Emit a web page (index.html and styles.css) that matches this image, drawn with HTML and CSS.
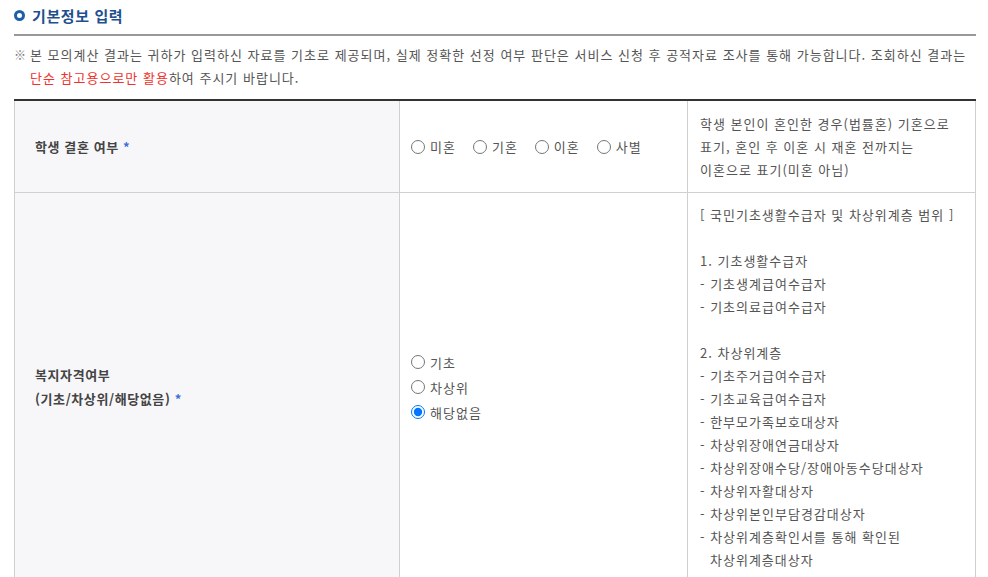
FILE: index.html
```html
<!DOCTYPE html>
<html lang="ko">
<head>
    <meta charset="UTF-8">
    <meta name="viewport" content="width=device-width, initial-scale=1.0">
    <title>기본정보 입력</title>
    <link rel="stylesheet" href="styles.css">
</head>
<body>
    <div class="container">
        <h2 class="section-title"><span class="title-dot"></span>기본정보 입력</h2>

        <p class="notice">
            <span class="notice-mark">※</span>
            <span>본 모의계산 결과는 귀하가 입력하신 자료를 기초로 제공되며, 실제 정확한 선정 여부 판단은 서비스 신청 후 공적자료 조사를 통해 가능합니다. 조회하신 결과는 <em class="red">단순 참고용으로만 활용</em>하여 주시기 바랍니다.</span>
        </p>

        <table class="form-table">
            <colgroup>
                <col class="col-label">
                <col class="col-input">
                <col class="col-desc">
            </colgroup>
            <tr class="row-married">
                <th>학생 결혼 여부 <span class="req">*</span></th>
                <td>
                    <div class="radio-row">
                        <label><input type="radio" name="married">미혼</label>
                        <label><input type="radio" name="married">기혼</label>
                        <label><input type="radio" name="married">이혼</label>
                        <label><input type="radio" name="married">사별</label>
                    </div>
                </td>
                <td class="desc">
                    학생 본인이 혼인한 경우(법률혼) 기혼으로<br>
                    표기, 혼인 후 이혼 시 재혼 전까지는<br>
                    이혼으로 표기(미혼 아님)
                </td>
            </tr>
            <tr>
                <th>복지자격여부<br>(기초/차상위/해당없음) <span class="req">*</span></th>
                <td>
                    <div class="radio-col">
                        <label><input type="radio" name="welfare">기초</label>
                        <label><input type="radio" name="welfare">차상위</label>
                        <label><input type="radio" name="welfare" checked>해당없음</label>
                    </div>
                </td>
                <td class="desc desc-list">
                    <p>[ 국민기초생활수급자 및 차상위계층 범위 ]</p>
                    <p>&nbsp;</p>
                    <p>1. 기초생활수급자</p>
                    <p>- 기초생계급여수급자</p>
                    <p>- 기초의료급여수급자</p>
                    <p>&nbsp;</p>
                    <p>2. 차상위계층</p>
                    <p>- 기초주거급여수급자</p>
                    <p>- 기초교육급여수급자</p>
                    <p>- 한부모가족보호대상자</p>
                    <p>- 차상위장애연금대상자</p>
                    <p>- 차상위장애수당/장애아동수당대상자</p>
                    <p>- 차상위자활대상자</p>
                    <p>- 차상위본인부담경감대상자</p>
                    <p class="hang">- 차상위계층확인서를 통해 확인된<br>차상위계층대상자</p>
                </td>
            </tr>
        </table>
    </div>
</body>
</html>
```

FILE: styles.css
```css
body {
    margin: 0;
    font-family: "Noto Sans CJK KR", "Noto Sans", sans-serif;
    font-size: 13px;
    letter-spacing: 1px;
    color: #555;
    background-color: white;
}
.container {
    padding: 0 12px 0 14px;
}
.section-title {
    display: flex;
    align-items: center;
    gap: 7px;
    margin: 0;
    height: 30px;
    font-size: 15px;
    font-weight: bold;
    letter-spacing: 0.6px;
    color: #1f4f8f;
    border-bottom: 2px solid #999;
    padding-bottom: 4px;
}
.title-dot {
    width: 5px;
    height: 5px;
    border: 3px solid #1f5fa8;
    border-radius: 50%;
}
.notice {
    display: flex;
    margin: 7px 0 10px;
    line-height: 23px;
    color: #555;
}
.notice-mark {
    flex: none;
    width: 16px;
    color: #777;
    font-size: 12px;
    letter-spacing: 0;
}
.red {
    font-style: normal;
    color: #f0312c;
}
.form-table {
    width: 962px;
    border-collapse: collapse;
    table-layout: fixed;
    border-top: 2px solid #333;
}
.col-label {
    width: 385px;
}
.col-input {
    width: 288px;
}
.form-table th,
.form-table td {
    border: 1px solid #d0d0d0;
    vertical-align: middle;
    line-height: 23px;
}
.form-table tr:first-child th,
.form-table tr:first-child td {
    border-top: none;
}
.form-table th {
    background-color: #f7f7f9;
    text-align: left;
    font-weight: bold;
    color: #444;
    padding: 0 20px;
    line-height: 24px;
    letter-spacing: 0.6px;
}
.form-table td {
    padding: 0 11px;
}
.req {
    color: #3b6fd8;
}
.radio-row {
    display: flex;
    gap: 17px;
}
.radio-row label,
.radio-col label {
    display: flex;
    align-items: center;
    gap: 5px;
    color: #555;
}
.radio-col {
    display: flex;
    flex-direction: column;
    gap: 2px;
}
input[type="radio"] {
    width: 14px;
    height: 14px;
    margin: 0;
}
.form-table td.desc {
    padding: 11px 12px;
    color: #555;
}
.form-table td.desc-list {
    padding-top: 10px;
    padding-bottom: 10px;
}
.desc-list p {
    margin: 0;
}
.hang {
    padding-left: 10px;
    text-indent: -10px;
}
```
